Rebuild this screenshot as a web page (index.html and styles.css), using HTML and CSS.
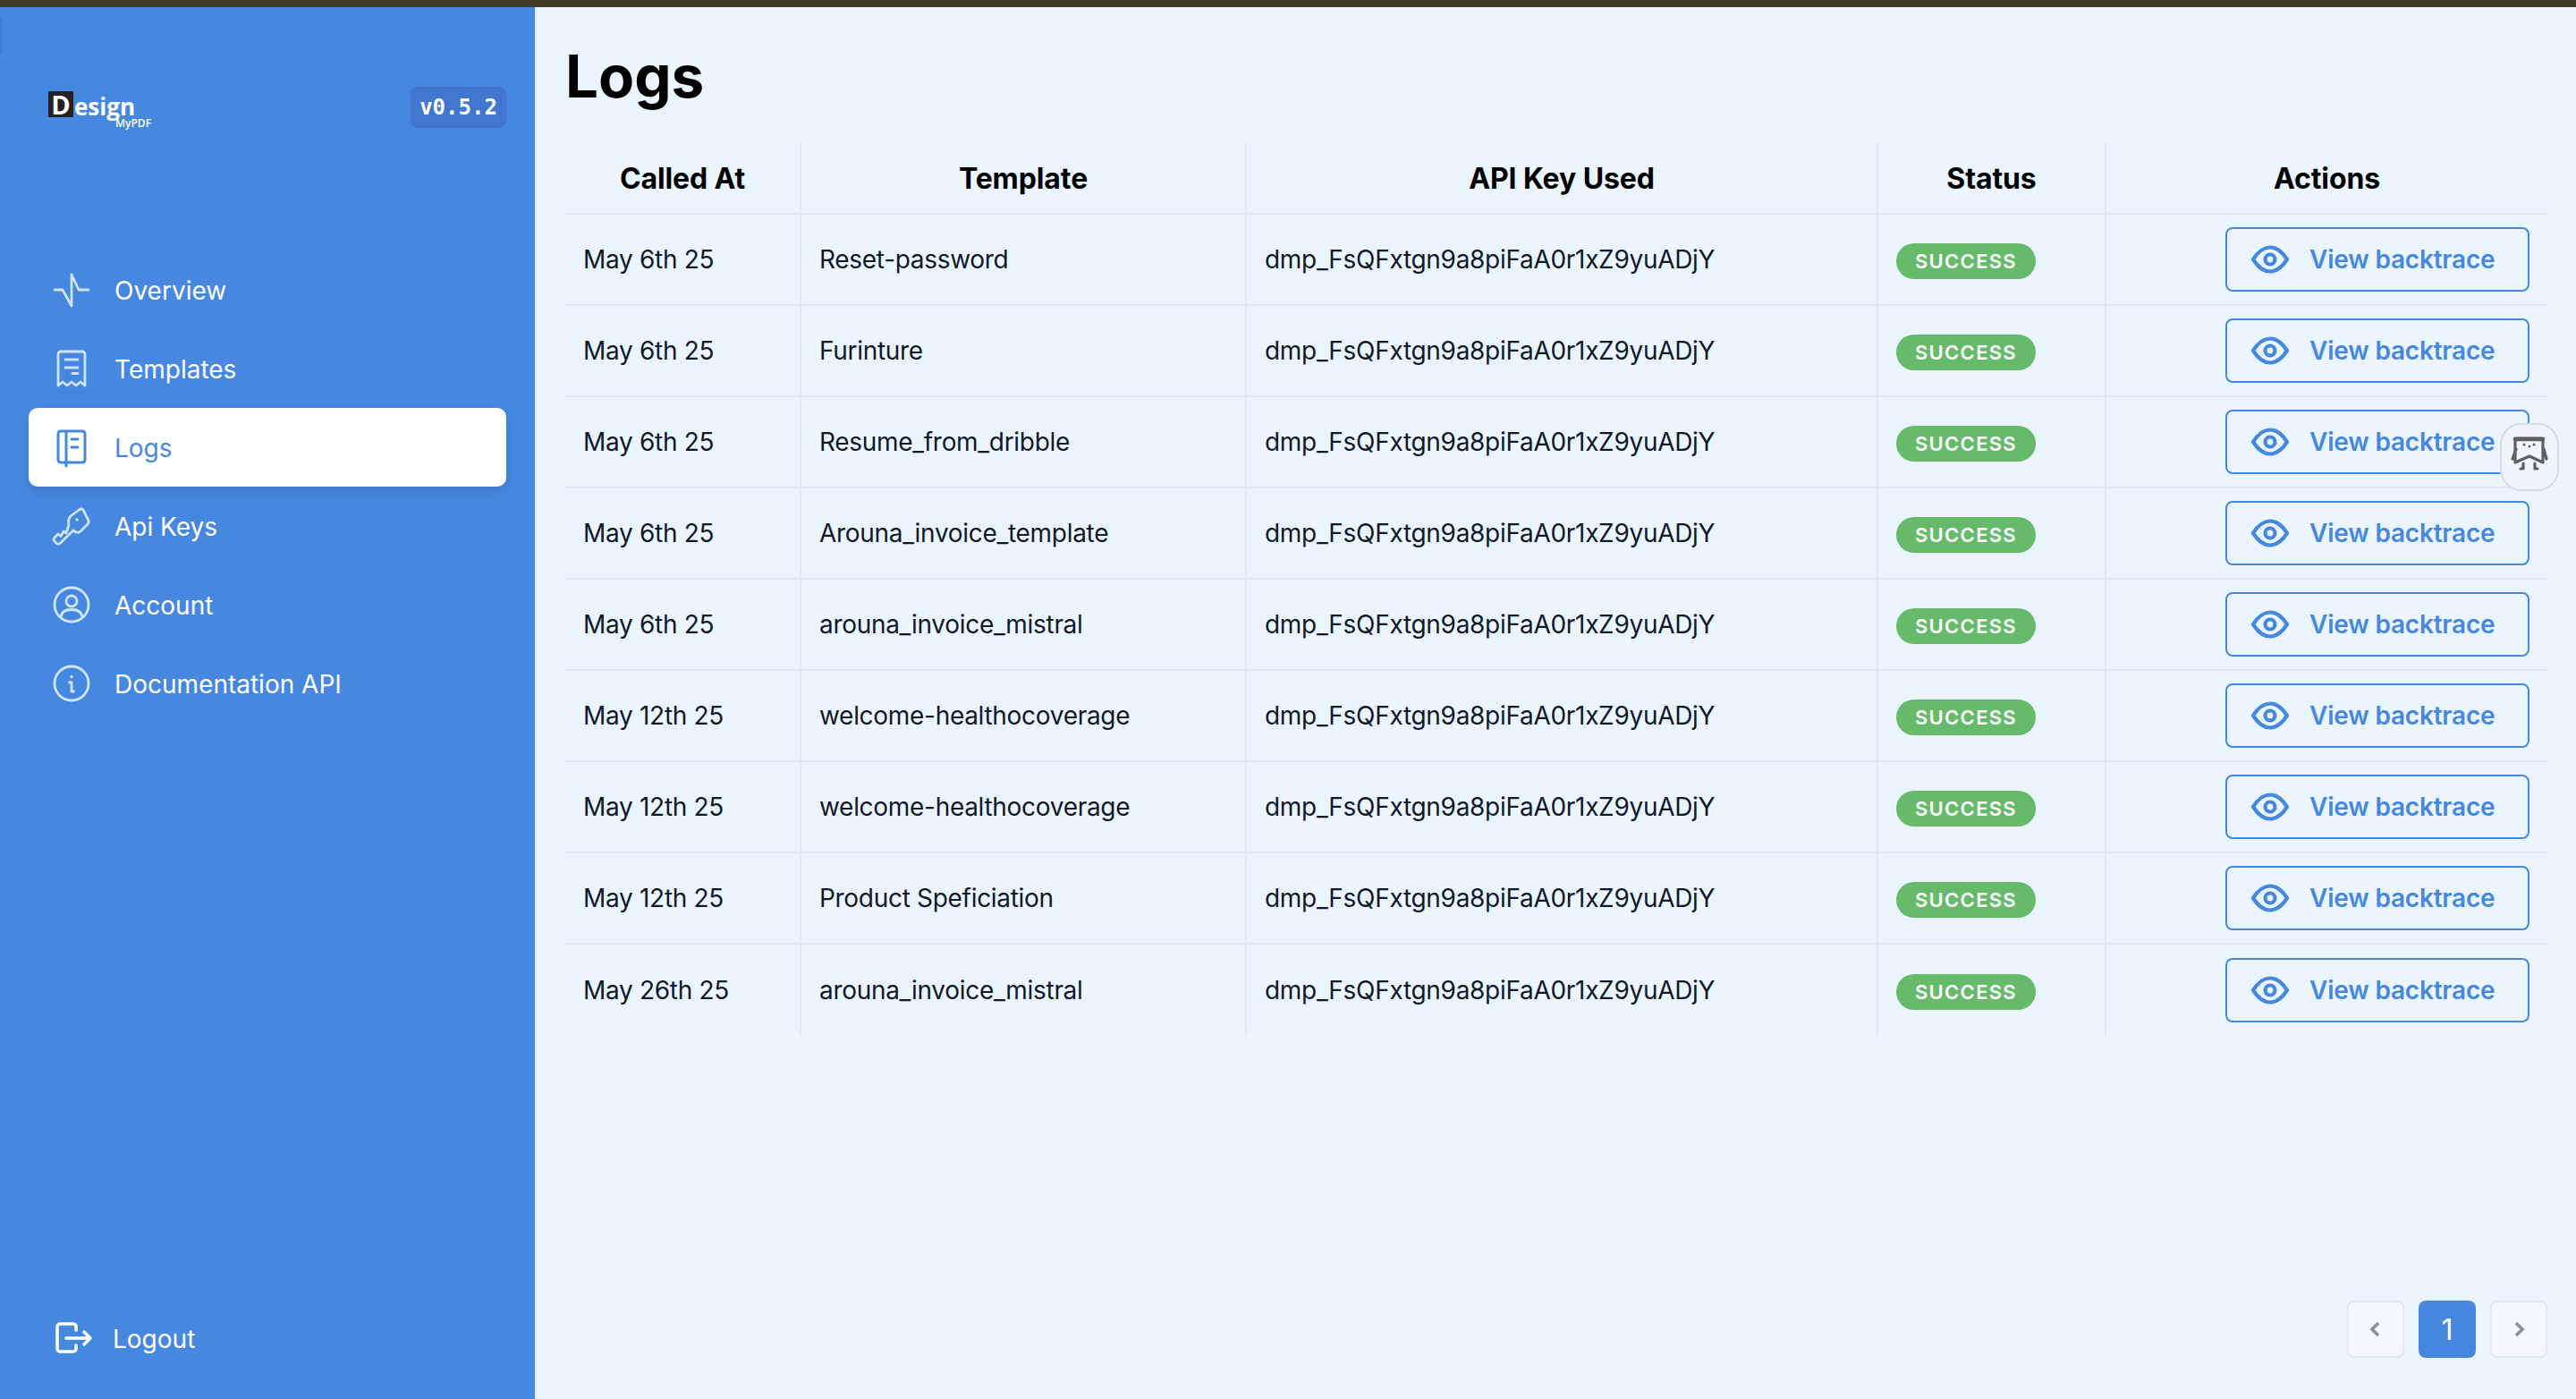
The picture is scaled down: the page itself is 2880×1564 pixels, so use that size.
FILE: index.html
```html
<!DOCTYPE html>
<html lang="en">
<head>
<meta charset="utf-8">
<title>Logs</title>
<link rel="stylesheet" href="styles.css">
</head>
<body>
<svg class="sprite" width="0" height="0" aria-hidden="true">
  <symbol id="eye" viewBox="0 0 48 48">
    <path d="M5 24 C9.500 17 15.500 10.500 24 10.500 S38.500 17 43 24 C38.500 31 32.500 37.500 24 37.500 S9.500 31 5 24Z"/>
    <circle cx="24" cy="24" r="5.500"/>
  </symbol>
</svg>
<div class="topbar"></div>
<div class="edge-tab"></div>
<div class="app">
  <aside class="sidebar">
    <div class="brand">
      <div class="logo"><span class="logo-d">D</span><span class="logo-word">esign</span><span class="logo-sub">MyPDF</span></div>
      <span class="version">v0.5.2</span>
    </div>
    <nav class="nav">
      <a class="nav-item"><svg class="nav-icon" viewBox="0 0 48 48"><path d="M5 24H14L24 42V7L32 24H43"/></svg><span>Overview</span></a>
      <a class="nav-item"><svg class="nav-icon" viewBox="0 0 48 48"><path d="M9 43V8a3 3 0 0 1 3-3H36a3 3 0 0 1 3 3V43l-5-4-5 4-5-4-5 4-5-4ZM17 14H31M17 23H31M25 29.500H31"/></svg><span>Templates</span></a>
      <a class="nav-item active"><svg class="nav-icon" viewBox="0 0 48 48"><path d="M12 6H36a3 3 0 0 1 3 3V38a3 3 0 0 1-3 3H12a3 3 0 0 1-3-3V9a3 3 0 0 1 3-3ZM18 6V45M24 15H31M24 24H31"/></svg><span>Logs</span></a>
      <a class="nav-item"><svg class="nav-icon" viewBox="0 0 48 48"><path d="M23 13L33 5.500Q35.500 4 37 6L42.500 17Q44 20 42 22L34 30Q32 32 29 31L26 29L11 43.500Q9 45 7 43.500L5 41Q3 39 5 37L9 33L12 35.500L15 30L18 32L21 23Q19.500 17 23 13Z"/><circle class="dot" cx="30" cy="17" r="1.700"/></svg><span>Api Keys</span></a>
      <a class="nav-item"><svg class="nav-icon" viewBox="0 0 48 48"><circle cx="24" cy="24" r="19"/><circle cx="24" cy="20" r="6"/><path d="M12 38Q13 29.500 24 29.500T36 38"/></svg><span>Account</span></a>
      <a class="nav-item"><svg class="nav-icon" viewBox="0 0 48 48"><circle cx="24" cy="24" r="19"/><path d="M21.500 23H24V33H26.500"/><circle class="dot" cx="24" cy="16.500" r="1.700"/></svg><span>Documentation API</span></a>
    </nav>
    <a class="logout"><svg class="logout-icon" viewBox="0 0 48 48"><path d="M27 14V10a3 3 0 0 0-3-3H9a3 3 0 0 0-3 3V35a3 3 0 0 0 3 3H24a3 3 0 0 0 3-3V31M16 23H43M36 16L43 23L36 30"/></svg><span>Logout</span></a>
  </aside>
  <main class="main">
    <h1 class="title">Logs</h1>
    <table class="logs">
      <colgroup><col class="c1"><col class="c2"><col class="c3"><col class="c4"><col class="c5"></colgroup>
      <thead><tr><th>Called At</th><th>Template</th><th>API Key Used</th><th>Status</th><th>Actions</th></tr></thead>
      <tbody>
        <tr><td>May 6th 25</td><td>Reset-password</td><td>dmp_FsQFxtgn9a8piFaA0r1xZ9yuADjY</td><td><span class="badge">SUCCESS</span></td><td class="act"><button class="view"><svg class="eye"><use href="#eye"/></svg>View backtrace</button></td></tr>
        <tr><td>May 6th 25</td><td>Furinture</td><td>dmp_FsQFxtgn9a8piFaA0r1xZ9yuADjY</td><td><span class="badge">SUCCESS</span></td><td class="act"><button class="view"><svg class="eye"><use href="#eye"/></svg>View backtrace</button></td></tr>
        <tr><td>May 6th 25</td><td>Resume_from_dribble</td><td>dmp_FsQFxtgn9a8piFaA0r1xZ9yuADjY</td><td><span class="badge">SUCCESS</span></td><td class="act"><button class="view"><svg class="eye"><use href="#eye"/></svg>View backtrace</button></td></tr>
        <tr><td>May 6th 25</td><td>Arouna_invoice_template</td><td>dmp_FsQFxtgn9a8piFaA0r1xZ9yuADjY</td><td><span class="badge">SUCCESS</span></td><td class="act"><button class="view"><svg class="eye"><use href="#eye"/></svg>View backtrace</button></td></tr>
        <tr><td>May 6th 25</td><td>arouna_invoice_mistral</td><td>dmp_FsQFxtgn9a8piFaA0r1xZ9yuADjY</td><td><span class="badge">SUCCESS</span></td><td class="act"><button class="view"><svg class="eye"><use href="#eye"/></svg>View backtrace</button></td></tr>
        <tr><td>May 12th 25</td><td>welcome-healthocoverage</td><td>dmp_FsQFxtgn9a8piFaA0r1xZ9yuADjY</td><td><span class="badge">SUCCESS</span></td><td class="act"><button class="view"><svg class="eye"><use href="#eye"/></svg>View backtrace</button></td></tr>
        <tr><td>May 12th 25</td><td>welcome-healthocoverage</td><td>dmp_FsQFxtgn9a8piFaA0r1xZ9yuADjY</td><td><span class="badge">SUCCESS</span></td><td class="act"><button class="view"><svg class="eye"><use href="#eye"/></svg>View backtrace</button></td></tr>
        <tr><td>May 12th 25</td><td>Product Speficiation</td><td>dmp_FsQFxtgn9a8piFaA0r1xZ9yuADjY</td><td><span class="badge">SUCCESS</span></td><td class="act"><button class="view"><svg class="eye"><use href="#eye"/></svg>View backtrace</button></td></tr>
        <tr><td>May 26th 25</td><td>arouna_invoice_mistral</td><td>dmp_FsQFxtgn9a8piFaA0r1xZ9yuADjY</td><td><span class="badge">SUCCESS</span></td><td class="act"><button class="view"><svg class="eye"><use href="#eye"/></svg>View backtrace</button></td></tr>
      </tbody>
    </table>
    <div class="pager">
      <button class="page"><svg class="chev" viewBox="0 0 24 24"><path d="M15 5L8 12L15 19"/></svg></button>
      <button class="page current">1</button>
      <button class="page"><svg class="chev" viewBox="0 0 24 24"><path d="M9 5L16 12L9 19"/></svg></button>
    </div>
  </main>
</div>
<div class="helper">
  <svg class="helper-icon" viewBox="0 0 66 76">
    <path d="M17 17H48V44L33 37L17 44ZM18 29L14 40M49 29L52 40M26 45V51H23M39 45V51H42"/>
    <path class="helper-top" d="M17 18H48"/>
    <circle cx="27" cy="24" r="1.500"/><circle cx="38" cy="24" r="1.500"/><circle cx="33" cy="26" r="1.500"/>
  </svg>
</div>
</body>
</html>
```
FILE: styles.css
```css
* { box-sizing: border-box; }
html, body { margin: 0; height: 100%; }
body {
  position: relative;
  width: 2880px;
  height: 1564px;
  overflow: hidden;
  display: flex;
  flex-direction: column;
  background: #eaf5ff;
  font-family: Inter, "Liberation Sans", sans-serif;
  color: #111827;
}
.sprite { position: absolute; }
.topbar { height: 8px; flex: none; background: #3e3a24; }
.edge-tab {
  position: absolute;
  top: 20px;
  left: 0;
  width: 2px;
  height: 40px;
  border-radius: 0 2px 2px 0;
  background: #4080d4;
}
.app { flex: 1; display: flex; min-height: 0; }

.sidebar {
  width: 600px;
  flex: none;
  display: flex;
  flex-direction: column;
  padding: 0 32px 23px;
  background: #4688df;
  border-right: 2px solid #e2ecf6;
  color: #fff;
}
.brand {
  display: flex;
  justify-content: space-between;
  align-items: flex-start;
  padding-top: 89px;
  height: 272px;
}
.logo {
  position: relative;
  display: flex;
  align-items: flex-start;
  margin: 5px 0 0 22px;
  font-family: "Open Sans", sans-serif;
  font-weight: 700;
}
.logo-d {
  width: 28px;
  height: 29px;
  display: flex;
  align-items: center;
  justify-content: center;
  background: #222;
  font-size: 29px;
  line-height: 1;
}
.logo-word { font-size: 26px; line-height: 34px; margin-left: 1px; }
.logo-sub {
  position: absolute;
  left: 75px;
  top: 29px;
  font-size: 12px;
  font-weight: 600;
  line-height: 14px;
}
.version {
  height: 46px;
  width: 107px;
  display: flex;
  align-items: center;
  justify-content: center;
  border-radius: 8px;
  background: #3f78cc;
  font: 600 24px/1 "DejaVu Sans Mono", monospace;
}
.nav { display: flex; flex-direction: column; }
.nav-item {
  height: 88px;
  display: flex;
  align-items: center;
  gap: 24px;
  padding-left: 24px;
  border-radius: 10px;
  font-size: 28px;
  color: #fff;
}
.nav-item span { padding-top: 1px; }
.nav-icon {
  width: 48px;
  height: 48px;
  flex: none;
  fill: none;
  stroke: #cfe4fb;
  stroke-width: 2.800;
  stroke-linecap: round;
  stroke-linejoin: round;
}
.nav-icon .dot { fill: #cfe4fb; stroke: none; }
.nav-item.active {
  background: #fff;
  color: #4688df;
  box-shadow: 0 6px 14px rgba(0, 0, 0, .1);
}
.active .nav-icon { stroke: #4688df; stroke-width: 3; }
.logout {
  margin-top: auto;
  height: 88px;
  display: flex;
  align-items: center;
  gap: 20px;
  padding-left: 26px;
  font-size: 28px;
  color: #fff;
}
.logout-icon {
  width: 48px;
  height: 48px;
  flex: none;
  fill: none;
  stroke: #fff;
  stroke-width: 3.500;
  stroke-linecap: round;
  stroke-linejoin: round;
}

.main {
  flex: 1;
  min-width: 0;
  display: flex;
  flex-direction: column;
  padding: 46px 32px 46px;
}
.title {
  margin: 0 0 42px;
  font-size: 65.500px;
  line-height: 64px;
  font-weight: 700;
  color: #000;
}
.logs {
  width: 2216px;
  table-layout: fixed;
  border-collapse: separate;
  border-spacing: 0;
}
.c1 { width: 264px; }
.c2 { width: 498px; }
.c3 { width: 706px; }
.c4 { width: 255px; }
.c5 { width: 493px; }
.logs th, .logs td {
  padding: 0 20px;
  border-right: 2px solid #e2e8f0;
  border-bottom: 2px solid #e2e8f0;
}
.logs th:last-child, .logs td:last-child { border-right: 0; }
.logs tbody tr:last-child td { border-bottom: 0; }
.logs th {
  height: 80px;
  font-size: 32px;
  font-weight: 650;
  letter-spacing: -.1px;
  text-align: center;
  color: #000;
}
.logs td {
  height: 102px;
  font-size: 28px;
  letter-spacing: -.3px;
  text-align: left;
  color: #111827;
}
.logs td.act { text-align: right; }
.badge {
  display: flex;
  align-items: center;
  justify-content: center;
  width: 156px;
  height: 40px;
  margin-top: 4px;
  border-radius: 20px;
  background: #66bb6a;
  color: #fff;
  font-size: 22px;
  font-weight: 600;
  letter-spacing: 1.300px;
}
.view {
  display: inline-flex;
  align-items: center;
  width: 340px;
  height: 72px;
  padding: 0 0 0 24px;
  gap: 20px;
  border: 2px solid #4688df;
  border-radius: 8px;
  background: transparent;
  color: #4688df;
  font: 600 28px Inter, sans-serif;
  letter-spacing: -.2px;
  vertical-align: middle;
}
.eye {
  width: 48px;
  height: 48px;
  flex: none;
  fill: none;
  stroke: #4688df;
  stroke-width: 4.200;
  stroke-linejoin: round;
}
.pager {
  margin-top: auto;
  display: flex;
  justify-content: flex-end;
  gap: 16px;
}
.page {
  width: 64px;
  height: 64px;
  padding: 0;
  display: flex;
  align-items: center;
  justify-content: center;
  border: 2px solid #e2e8f0;
  border-radius: 8px;
  background: #f3f8fe;
  font: 400 32px Inter, sans-serif;
  color: #fff;
}
.page.current { background: #4688df; border-color: #4688df; }
.chev {
  width: 24px;
  height: 24px;
  fill: none;
  stroke: #8c8f96;
  stroke-width: 3.500;
}
.helper {
  position: absolute;
  top: 473px;
  right: 19px;
  width: 66px;
  height: 76px;
  border: 2px solid #d5dde6;
  border-radius: 24px;
  background: #f0f5fb;
}
.helper-icon {
  position: absolute;
  top: -2px;
  left: -2px;
  width: 66px;
  height: 76px;
  fill: none;
  stroke: #5f5f5f;
  stroke-width: 3.200;
  stroke-linejoin: round;
  stroke-linecap: round;
}
.helper-icon circle { fill: #5f5f5f; stroke: none; }
.helper-icon .helper-top { stroke-width: 4.500; }
```
